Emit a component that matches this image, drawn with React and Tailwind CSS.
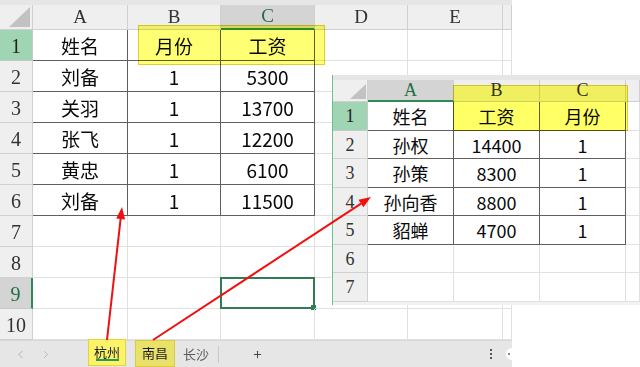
import React from 'react'
import { ChevronLeft, ChevronRight, Plus } from 'lucide-react'

const serif = "font-[family-name:'Liberation_Serif','DejaVu_Serif',serif]"
const cjk = "font-[family-name:'Noto_Sans_CJK_SC','Noto_Sans',sans-serif]"

const mainCols = [
  { name: 'A', w: 'w-[95px]' },
  { name: 'B', w: 'w-[93px]' },
  { name: 'C', w: 'w-[94px]' },
  { name: 'D', w: 'w-[93px]' },
  { name: 'E', w: 'w-[95px]' },
  { name: '', w: 'w-[9px]' },
]

const mainData = [
  ['姓名', '月份', '工资'],
  ['刘备', '1', '5300'],
  ['关羽', '1', '13700'],
  ['张飞', '1', '12200'],
  ['黄忠', '1', '6100'],
  ['刘备', '1', '11500'],
]

const nanchang = [
  ['姓名', '工资', '月份'],
  ['孙权', '14400', '1'],
  ['孙策', '8300', '1'],
  ['孙向香', '8800', '1'],
  ['貂蝉', '4700', '1'],
]

const Corner = ({ className, points }) => (
  <div className={`relative shrink-0 border-r border-b border-[#d0d0d0] ${className}`}>
    <svg className="absolute inset-0 h-full w-full">
      <polygon points={points} fill="#c2c2c2" />
    </svg>
  </div>
)

const MainSheet = () => {
  const rows = Array.from({ length: 10 }, (_, i) => i + 1)
  return (
    <div className="w-[512px] shrink-0 bg-white">
      <div className="h-[5px] bg-[#e6e6e6]" />
      {/* column headers */}
      <div className={`flex h-[25px] bg-[#efefef] text-[19px] text-[#333] ${serif}`}>
        <Corner className="w-[33px]" points="9,22 30,22 30,2" />
        {mainCols.map((col) => (
          <div
            key={col.w + col.name}
            className={`flex shrink-0 items-center justify-center border-r ${col.w} ${
              col.name === 'C'
                ? 'border-b-2 border-r-[#d0d0d0] border-b-[#2f8a57] bg-[#d4d4d4] text-[#1f6e45]'
                : 'border-b border-[#d0d0d0]'
            }`}
          >
            {col.name}
          </div>
        ))}
      </div>

      {rows.map((r) => (
        <div key={r} className="flex h-[31px]">
          <div
            className={`flex w-[33px] shrink-0 items-center justify-center border-b pt-[2px] text-[20px] ${serif} ${
              r === 1
                ? 'border-r border-[#c8c8c8] bg-[#9fd5b3] text-[#222]'
                : r === 9
                ? 'border-r-2 border-b-[#c8c8c8] border-r-[#2f8a57] bg-[#d4d4d4] text-[#1f6e45]'
                : 'border-r border-[#d0d0d0] bg-[#efefef] text-[#333]'
            }`}
          >
            {r}
          </div>
          {mainCols.map((col, c) => {
            const inTable = r <= 6 && c <= 2
            const text = inTable ? mainData[r - 1][c] : ''
            return (
              <div
                key={c}
                className={`relative flex shrink-0 items-center justify-center border-r border-b pt-[2px] text-[19px] text-[#0a0a0a] ${cjk} ${col.w} ${
                  inTable ? 'border-[#5f5f5f]' : 'border-[#e0e0e0]'
                }`}
              >
                {text}
                {r === 9 && c === 2 && (
                  <div className="absolute -top-px -left-px h-[32px] w-[95px] border-2 border-[#2f7d50]">
                    <div className="absolute -right-[3px] -bottom-[3px] h-[5px] w-[5px] bg-[#2f7d50]" />
                  </div>
                )}
              </div>
            )
          })}
        </div>
      ))}

      {/* sheet tabs */}
      <div className="flex h-[27px] items-center border-t border-[#d8d8d8] bg-[#e6e6e6] text-[13px]">
        <div className="flex w-[40px] justify-center text-[#a9a9a9]">
          <ChevronLeft size={13} strokeWidth={1.6} />
        </div>
        <div className="flex w-[12px] justify-center text-[#a9a9a9]">
          <ChevronRight size={13} strokeWidth={1.6} />
        </div>
        <div className={`relative ml-[36px] flex h-[27px] w-[38px] -translate-y-[2px] items-center justify-center border border-[#e8d23a] bg-[#fbf36a] text-[#222] ${cjk}`}>
          杭州
          <div className="absolute bottom-[4px] left-[7px] h-[2px] w-[23px] bg-[#2c9a52]" />
        </div>
        <div className={`ml-[9px] flex h-[27px] w-[40px] -translate-y-[1px] items-center justify-center border border-[#dccb3c] bg-[#e9e26a] text-[#222] ${cjk}`}>
          南昌
        </div>
        <div className={`ml-[8px] w-[26px] text-[#5a5a5a] ${cjk}`}>长沙</div>
        <div className="ml-[9px] h-[17px] w-px bg-[#c9c9c9]" />
        <div className="ml-[33px] text-[#444]">
          <Plus size={11} strokeWidth={2.2} />
        </div>
        <div className="ml-auto mr-[14px] flex flex-col gap-[2px]">
          <div className="h-[2px] w-[2px] bg-[#555]" />
          <div className="h-[2px] w-[2px] bg-[#555]" />
          <div className="h-[2px] w-[2px] bg-[#555]" />
        </div>
        <div className="-mr-[6px] h-[12px] w-[12px] rounded-full bg-white">
          <div className="mt-[5px] ml-[2px] h-[2px] w-[2px] bg-[#888]" />
        </div>
      </div>
    </div>
  )
}

const overlayCols = [
  { name: 'A', w: 'w-[86px]' },
  { name: 'B', w: 'w-[86px]' },
  { name: 'C', w: 'w-[86px]' },
  { name: '', w: 'w-[14px]' },
]

const OverlaySheet = () => {
  const rows = Array.from({ length: 7 }, (_, i) => i + 1)
  return (
    <div className="absolute top-[75px] left-[332px] w-[308px] border-l border-[#6fbf8f] bg-white">
      <div className="h-[5px] bg-[#e6e6e6]" />
      <div className={`flex h-[22px] bg-[#efefef] text-[18px] text-[#333] ${serif}`}>
        <Corner className="w-[35px]" points="17,19 33,19 33,4" />
        {overlayCols.map((col) => (
          <div
            key={col.w + col.name}
            className={`flex shrink-0 items-center justify-center border-r ${col.w} ${
              col.name === 'A'
                ? 'border-b-2 border-r-[#d0d0d0] border-b-[#2f8a57] bg-[#d4d4d4] text-[#1f6e45]'
                : 'border-b border-[#d0d0d0]'
            }`}
          >
            {col.name}
          </div>
        ))}
      </div>
      {rows.map((r) => (
        <div key={r} className="flex h-[28.5px]">
          <div
            className={`flex w-[35px] shrink-0 items-center justify-center border-r border-b pt-[2px] text-[18px] ${serif} ${
              r === 1 ? 'border-[#c8c8c8] bg-[#9fd5b3] text-[#222]' : 'border-[#d0d0d0] bg-[#efefef] text-[#333]'
            }`}
          >
            {r}
          </div>
          {overlayCols.map((col, c) => {
            const inTable = r <= 5 && c <= 2
            return (
              <div
                key={c}
                className={`flex shrink-0 items-center justify-center border-r border-b pt-[2px] text-[18px] text-[#0a0a0a] ${cjk} ${col.w} ${
                  inTable ? 'border-[#5f5f5f]' : 'border-[#e0e0e0]'
                }`}
              >
                {inTable ? nanchang[r - 1][c] : ''}
              </div>
            )
          })}
        </div>
      ))}
      <div className="h-[3px] bg-[#f2f2f2]" />
    </div>
  )
}

const Arrows = () => (
  <svg className="pointer-events-none absolute inset-0 h-[367px] w-[640px]">
    <line x1="107" y1="340" x2="120.6" y2="218.9" stroke="#f01010" strokeWidth="2" />
    <polygon points="122,207 125.1,219.4 116.2,218.4" fill="#f01010" />
    <line x1="153" y1="340" x2="361" y2="203.6" stroke="#f01010" strokeWidth="2" />
    <polygon points="371,197 363.4,207.3 358.5,199.8" fill="#f01010" />
  </svg>
)

export default function App() {
  return (
    <div className="relative flex h-[367px] w-[640px] overflow-hidden bg-white">
      <MainSheet />
      <div className="pointer-events-none absolute top-[25px] left-[138px] h-[40px] w-[187px] border border-[#e3cf2a] bg-[#ffff00]/55 mix-blend-multiply" />
      <OverlaySheet />
      <div className="pointer-events-none absolute top-[85px] left-[453px] h-[46px] w-[175px] border border-[#e3cf2a] bg-[#ffff00]/60 mix-blend-multiply" />
      <Arrows />
    </div>
  )
}
